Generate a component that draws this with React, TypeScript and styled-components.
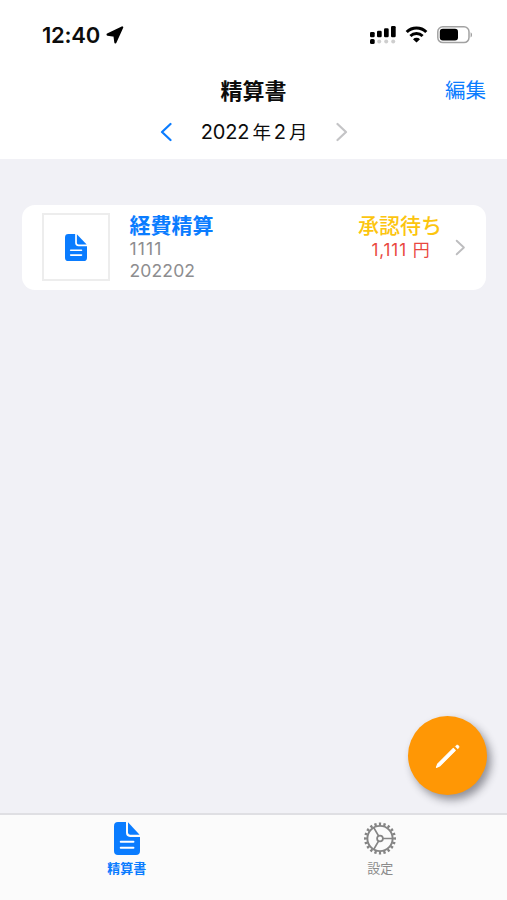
import React from "react";
import styled, { createGlobalStyle } from "styled-components";

const blue = "#0a7cff";

const GlobalStyle = createGlobalStyle`
  * { box-sizing: border-box; }
  body { margin: 0; background: #f1f1f6; }
  button { font: inherit; color: inherit; border: 0; padding: 0; background: none; }
`;

const Screen = styled.div`
  display: flex;
  flex-direction: column;
  width: 507px;
  height: 900px;
  background: #f1f1f6;
  color: #0c0c0c;
  font-family: Inter, "Noto Sans CJK JP", sans-serif;
  overflow: hidden;
  position: relative;
`;

const Header = styled.header`
  height: 159px;
  background: #fff;
`;

const StatusBar = styled.div`
  display: flex;
  align-items: center;
  justify-content: space-between;
  height: 70px;
  padding: 0 34px 0 42px;
`;

const Clock = styled.div`
  display: flex;
  align-items: center;
  gap: 6px;
  font-size: 22px;
  font-weight: 600;
  line-height: 28px;
  letter-spacing: -0.25px;
`;

const Indicators = styled.div`
  display: flex;
  align-items: center;
  height: 22px;
`;

const TitleRow = styled.div`
  display: grid;
  grid-template-columns: 1fr auto 1fr;
  align-items: start;
  height: 41px;
  padding: 0 21px;
`;

const Title = styled.h1`
  grid-column: 2;
  margin: 0;
  font-size: 22px;
  font-weight: 700;
  line-height: 42px;
`;

const EditButton = styled.button`
  justify-self: end;
  color: ${blue};
  font-size: 20.5px;
  line-height: 42px;
`;

const MonthRow = styled.div`
  display: flex;
  align-items: center;
  justify-content: space-between;
  width: 188px;
  height: 42px;
  margin: 0 0 0 160px;
`;

const MonthLabel = styled.div`
  display: flex;
  gap: 3px;
  font-size: 20px;
  font-weight: 400;
  line-height: 42px;
  letter-spacing: -0.1px;
  white-space: nowrap;
`;

const Kanji = styled.span`
  font-size: 18.5px;
  font-weight: 400;
`;

const Content = styled.main`
  flex: 1;
  padding: 46px 21px 0 22px;
`;

const Card = styled.article`
  display: flex;
  align-items: center;
  height: 85px;
  padding: 0 20px 1px;
  border-radius: 13px;
  background: #fff;
`;

const Thumbnail = styled.div`
  display: grid;
  place-items: center;
  width: 68px;
  height: 68px;
  border: 2px solid #ededed;
`;

const Details = styled.div`
  display: flex;
  flex-direction: column;
  flex: 1;
  padding-left: 19.5px;
  height: 76px;
`;

const ReportName = styled.div`
  color: ${blue};
  font-size: 21px;
  font-weight: 700;
  line-height: 33px;
  height: 29px;
`;

const Meta = styled.div<{ $spacing: number }>`
  color: #8d8d8f;
  font-size: 17.5px;
  line-height: 22px;
  letter-spacing: ${(p) => p.$spacing}px;
`;

const StatusColumn = styled.div`
  display: flex;
  flex-direction: column;
  align-items: center;
  height: 76px;
  width: 84px;
  margin-right: 13px;
`;

const Status = styled.div`
  color: #fcc50f;
  font-size: 21px;
  font-weight: 500;
  line-height: 34px;
  height: 29px;
  white-space: nowrap;
`;

const Amount = styled.div`
  color: #e9483f;
  font-size: 17px;
  line-height: 24px;
  letter-spacing: 0.9px;
  padding-left: 2px;
  white-space: nowrap;
`;

const TabBar = styled.nav`
  display: grid;
  grid-template-columns: 1fr 1fr;
  height: 87px;
  border-top: 2px solid #dfdfe3;
  background: #fbfbfb;
`;

const Tab = styled.button<{ $active?: boolean }>`
  display: flex;
  flex-direction: column;
  align-items: center;
  padding-top: 7px;
  color: ${(p) => (p.$active ? blue : "#8b8b8b")};
  font-size: 13px;
  font-weight: ${(p) => (p.$active ? 700 : 400)};
  line-height: 22px;

  svg { margin-bottom: 2px; }
`;

const ComposeButton = styled.button`
  position: absolute;
  right: 20px;
  bottom: 105px;
  display: grid;
  place-items: center;
  width: 79px;
  height: 79px;
  border-radius: 50%;
  background: #ff9705;
  box-shadow: 4px 5px 8px rgba(40, 40, 50, 0.48);
`;

const LocationArrow = () => (
  <svg width="18" height="18" viewBox="0 0 18 18">
    <path d="M16.2 1.4 1.6 8.6l6.9 1 .9 6.7z" fill="#000" stroke="#000" strokeWidth="2.2" strokeLinejoin="round" />
  </svg>
);

const Signal = () => (
  <svg width="28" height="20" viewBox="0 0 28 20">
    <rect x="1" y="7" width="4.7" height="5.2" rx="1.3" />
    <rect x="8" y="5.7" width="4.7" height="6.5" rx="1.3" />
    <rect x="15" y="3.2" width="4.7" height="9" rx="1.3" />
    <rect x="22" y="0.9" width="4.7" height="11.3" rx="1.3" />
    <rect x="1" y="14" width="4.7" height="5" rx="1.5" />
    <g fill="#cecece">
      <circle cx="10.2" cy="16.4" r="2" />
      <circle cx="17.2" cy="16.4" r="2" />
      <circle cx="24.2" cy="16.4" r="2" />
    </g>
  </svg>
);

const Wifi = () => (
  <svg width="40" height="20" viewBox="0 0 40 20" fill="none" stroke="#000">
    <path d="M9.7 7a14 14 0 0 1 19.6 0" strokeWidth="3.1" />
    <path d="M13.4 11a8.8 8.8 0 0 1 12.2 0" strokeWidth="3" />
    <path d="m16 14.2 3.5 3.4 3.5-3.4a5 5 0 0 0-7 0z" fill="#000" stroke="none" />
  </svg>
);

const Battery = () => (
  <svg width="36" height="20" viewBox="0 0 36 20">
    <rect x="0.8" y="1.8" width="31.2" height="15.8" rx="5" fill="none" stroke="#a2a2a2" strokeWidth="1.5" />
    <rect x="2.8" y="3.8" width="18.2" height="11.8" rx="3" />
    <path d="M33.6 7.2c1.8.7 1.8 4.5 0 5.2z" fill="#999" />
  </svg>
);

const Chevron = ({ left, color, width, height }: { left?: boolean; color: string; width: number; height: number }) => (
  <svg width={width} height={height} viewBox="0 0 12 20" fill="none" stroke={color} strokeWidth="2.2" strokeLinecap="round" strokeLinejoin="round">
    <path d={left ? "M10.5 2 2 10l8.5 8" : "m1.5 2 8.5 8-8.5 8"} />
  </svg>
);

const DocumentIcon = ({ width, height }: { width: number; height: number }) => (
  <svg width={width} height={height} viewBox="0 0 26 32" preserveAspectRatio="none">
    <path d="M4 0h8v10.5a4 4 0 0 0 4 4h10V28a4 4 0 0 1-4 4H4a4 4 0 0 1-4-4V4a4 4 0 0 1 4-4z" fill={blue} />
    <path d="M14 0.3 25.6 12.3H16a2 2 0 0 1-2-2z" fill={blue} />
    <path d="M6.7 19.2h12.8M6.7 25h12.8" stroke="#fff" strokeWidth="1.9" strokeLinecap="round" />
  </svg>
);

const GearIcon = () => (
  <svg width="34" height="33" viewBox="0 0 34 34" fill="none" stroke="#858585">
    <circle cx="17" cy="17" r="15" strokeWidth="3" pathLength="80" strokeDasharray="2 2" strokeDashoffset="1" />
    <circle cx="17" cy="17" r="13" strokeWidth="2" />
    <circle cx="17" cy="17" r="3" strokeWidth="1.8" />
    <path d="M20 17h9.7M15.5 14.3 10.7 6M15.5 19.7 10.7 28" strokeWidth="1.8" />
  </svg>
);

const PencilIcon = () => (
  <svg width="28" height="28" viewBox="0 0 28 28">
    <path d="m2.4 25.4 1.2-3.3L19.3 6.4l2 2L5.6 24.1z" fill="#fff" stroke="#fff" strokeWidth="1.1" strokeLinejoin="round" />
    <path d="m21.3 4.4 1-1c1.3-1.2 3.7 1 2.5 2.4l-1.1 1.1z" fill="#fff" stroke="#fff" strokeWidth="0.5" />
  </svg>
);

export default function App() {
  return (
    <>
      <GlobalStyle />
      <Screen>
        <Header>
          <StatusBar>
            <Clock>12:40<LocationArrow /></Clock>
            <Indicators><Signal /><Wifi /><Battery /></Indicators>
          </StatusBar>
          <TitleRow>
            <Title>精算書</Title>
            <EditButton>編集</EditButton>
          </TitleRow>
          <MonthRow>
            <Chevron left color={blue} width={12} height={20} />
            <MonthLabel>2022<Kanji>年</Kanji>2<Kanji>月</Kanji></MonthLabel>
            <Chevron color="#c4c4c6" width={12} height={20} />
          </MonthRow>
        </Header>
        <Content>
          <Card>
            <Thumbnail><DocumentIcon width={22} height={27} /></Thumbnail>
            <Details>
              <ReportName>経費精算</ReportName>
              <Meta $spacing={1.1}>1111</Meta>
              <Meta $spacing={0.15}>202202</Meta>
            </Details>
            <StatusColumn>
              <Status>承認待ち</Status>
              <Amount>1,111 円</Amount>
            </StatusColumn>
            <Chevron color="#bdbdbf" width={11} height={17} />
          </Card>
        </Content>
        <TabBar>
          <Tab $active><DocumentIcon width={26} height={33} />精算書</Tab>
          <Tab><GearIcon />設定</Tab>
        </TabBar>
        <ComposeButton aria-label="作成"><PencilIcon /></ComposeButton>
      </Screen>
    </>
  );
}
